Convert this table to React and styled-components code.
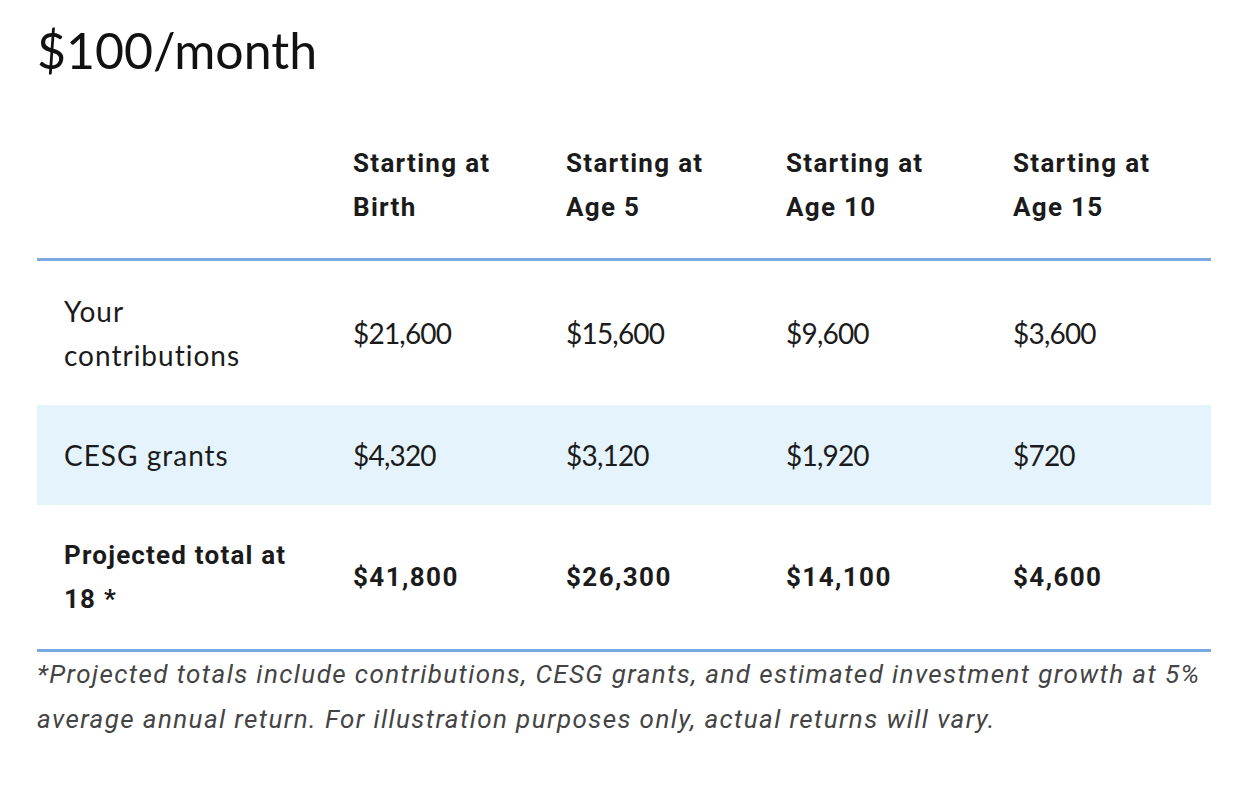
import styled, { createGlobalStyle } from 'styled-components'

const Global = createGlobalStyle`
    body {
        margin: 0;
        background: #fff;
        color: #1b1b1b;
        font-family: Lato, "Open Sans", sans-serif;
    }
`

const Page = styled.div`
    padding: 18px 33px 0 37px;
`

const Title = styled.h2`
    margin: 0 0 32px;
    font-family: Lato, sans-serif;
    font-weight: 400;
    font-size: 50px;
    line-height: 64px;
    color: #111;
`

const Table = styled.table`
    width: 1174px;
    border-collapse: collapse;
    table-layout: fixed;
    border-bottom: 3px solid #7ba8de;
`

const Head = styled.thead`
    border-bottom: 3px solid #7ba8de;
`

const Th = styled.th`
    text-align: left;
    vertical-align: top;
    font-family: Roboto, sans-serif;
    font-weight: 700;
    font-size: 26px;
    letter-spacing: 1.3px;
    line-height: 44px;
    padding: 27px 20px 29px 27px;
`

const Row = styled.tr`
    background: ${p => (p.shaded ? '#e5f3fd' : 'transparent')};
`

const Cell = styled.td`
    vertical-align: middle;
    padding: 28px 20px 28px 27px;
    line-height: 44px;
    font-family: ${p => (p.strong ? 'Roboto, sans-serif' : 'Lato, sans-serif')};
    font-weight: ${p => (p.strong ? 700 : 400)};
    font-size: ${p => (p.strong ? '26px' : '28px')};
    letter-spacing: ${p => (p.strong ? '1.4px' : '-0.8px')};
`

const Label = styled(Cell)`
    padding-right: ${p => (p.strong ? '8px' : '40px')};
    letter-spacing: ${p => (p.strong ? '1.2px' : '1px')};
`

const Note = styled.p`
    margin: 0;
    font-family: Roboto, sans-serif;
    font-style: italic;
    font-size: 26px;
    letter-spacing: 1.4px;
    line-height: 45px;
    color: #444;
`

const cols = ['Birth', 'Age 5', 'Age 10', 'Age 15']

const rows = [
    { label: 'Your contributions', values: ['$21,600', '$15,600', '$9,600', '$3,600'] },
    { label: 'CESG grants', values: ['$4,320', '$3,120', '$1,920', '$720'], shaded: true },
    { label: 'Projected total at 18 *', values: ['$41,800', '$26,300', '$14,100', '$4,600'], strong: true },
]

export default function App() {
    return (
        <Page>
            <Global />
            <Title>$100/month</Title>
            <Table>
                <colgroup>
                    <col style={{ width: 289 }} />
                    <col style={{ width: 213 }} />
                    <col style={{ width: 220 }} />
                    <col style={{ width: 227 }} />
                    <col style={{ width: 225 }} />
                </colgroup>
                <Head>
                    <tr>
                        <Th />
                        {cols.map(c => (
                            <Th key={c}>
                                Starting at
                                <br />
                                {c}
                            </Th>
                        ))}
                    </tr>
                </Head>
                <tbody>
                    {rows.map(r => (
                        <Row key={r.label} shaded={r.shaded}>
                            <Label strong={r.strong}>{r.label}</Label>
                            {r.values.map(v => (
                                <Cell key={v} strong={r.strong}>
                                    {v}
                                </Cell>
                            ))}
                        </Row>
                    ))}
                </tbody>
            </Table>
            <Note>
                *Projected totals include contributions, CESG grants, and estimated investment growth at 5%
                average annual return. For illustration purposes only, actual returns will vary.
            </Note>
        </Page>
    )
}
